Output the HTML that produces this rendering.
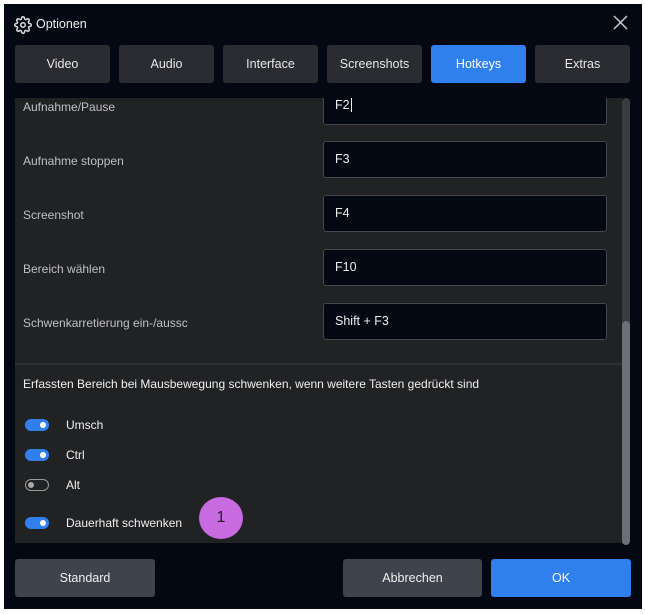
<!DOCTYPE html>
<html><head><style>
*{margin:0;padding:0;box-sizing:border-box}
body{width:645px;height:614px;background:#fff;font-family:"Liberation Sans",sans-serif;position:relative;overflow:hidden}
.win{position:absolute;left:4px;top:4px;width:638px;height:605px;background:#030812}
.a{position:absolute}
.tab{position:absolute;top:45px;width:95px;height:38px;background:#2a2c31;border-radius:3px;color:#e8e8e8;font-size:12.5px;text-align:center;line-height:38px}
.lbl{position:absolute;left:23px;color:#bfc0c4;font-size:12px}
.inp{position:absolute;left:323px;width:284px;height:37px;background:#030812;border:1px solid #45474c;border-radius:3px;color:#f0f0f0;font-size:12.5px;padding-left:11px;line-height:35px}
.tg{position:absolute;left:25px;width:24px;height:12px;border-radius:6px;background:#2f80ed}
.tg::after{content:"";position:absolute;right:3px;top:3px;width:6px;height:6px;border-radius:50%;background:#fff}
.tg.off::after{display:none}
.tl{position:absolute;left:66px;color:#f0f0f0;font-size:12px}
.btn{position:absolute;top:559px;height:38px;border-radius:3px;color:#eee;font-size:12.5px;text-align:center;line-height:38px}
</style></head><body>
<div class="win"></div>
<svg class="a" style="left:14px;top:16px" width="18" height="18" viewBox="0 0 24 24" fill="none" stroke="#ddd" stroke-width="2"><circle cx="12" cy="12" r="3"/><path d="M19.4 15a1.65 1.65 0 0 0 .33 1.82l.06.06a2 2 0 1 1-2.83 2.830l-.06-.06a1.65 1.65 0 0 0-1.820-.33 1.65 1.65 0 0 0-1 1.51V21a2 2 0 1 1-4 0v-.09A1.65 1.65 0 0 0 9 19.4a1.65 1.65 0 0 0-1.82.33l-.06.06a2 2 0 1 1-2.83-2.83l.06-.06a1.65 1.65 0 0 0 .33-1.82 1.65 1.65 0 0 0-1.51-1H3a2 2 0 1 1 0-4h.09A1.65 1.65 0 0 0 4.6 9a1.65 1.65 0 0 0-.33-1.82l-.06-.06a2 2 0 1 1 2.83-2.83l.06.06a1.65 1.65 0 0 0 1.82.33H9a1.650 1.65 0 0 0 1-1.51V3a2 2 0 1 1 4 0v.09a1.65 1.65 0 0 0 1 1.51 1.65 1.65 0 0 0 1.82-.33l.06-.06a2 2 0 1 1 2.83 2.83l-.06.06a1.65 1.65 0 0 0-.33 1.82V9a1.65 1.65 0 0 0 1.51 1H21a2 2 0 1 1 0 4h-.09a1.65 1.65 0 0 0-1.51 1z"/></svg>
<div class="a" style="left:36px;top:17px;color:#eee;font-size:12.5px">Optionen</div>
<svg class="a" style="left:613px;top:15px" width="15" height="15" viewBox="0 0 15 15" stroke="#ccc" stroke-width="1.5"><path d="M1 1L14 14M14 1L1 14"/></svg>
<div class="tab" style="left:15px">Video</div>
<div class="tab" style="left:119px">Audio</div>
<div class="tab" style="left:223px">Interface</div>
<div class="tab" style="left:327px">Screenshots</div>
<div class="tab" style="left:431px;background:#2f80ed;color:#fff">Hotkeys</div>
<div class="tab" style="left:535px">Extras</div>
<div class="a" style="left:15px;top:98px;width:607px;height:445px;background:#212224;overflow:hidden">
<div class="a" style="left:0;top:265px;width:607px;height:2px;background:#2e2f33"></div>
</div>
<div class="a" style="left:622px;top:98px;width:8px;height:447px;background:#3a3b3f;border-radius:4px"></div>
<div class="a" style="left:622px;top:321px;width:8px;height:224px;background:#6b6f78;border-radius:4px"></div>
<div class="lbl" style="top:100px">Aufnahme/Pause</div>
<div class="lbl" style="top:154px">Aufnahme stoppen</div>
<div class="lbl" style="top:208px">Screenshot</div>
<div class="lbl" style="top:262px">Bereich wählen</div>
<div class="lbl" style="top:316px">Schwenkarretierung ein-/aussc</div>
<div class="inp" style="top:98px;height:27px;border-top:none;border-radius:0 0 3px 3px;line-height:15px">F2<span style="border-left:1px solid #fff;margin-left:1px"></span></div>
<div class="inp" style="top:141px">F3</div>
<div class="inp" style="top:195px">F4</div>
<div class="inp" style="top:249px">F10</div>
<div class="inp" style="top:303px">Shift + F3</div>
<div class="a" style="left:23px;top:377px;color:#f0f0f0;font-size:12px">Erfassten Bereich bei Mausbewegung schwenken, wenn weitere Tasten gedrückt sind</div>
<div class="tg" style="top:419px"></div><div class="tl" style="top:418px">Umsch</div>
<div class="tg" style="top:449px"></div><div class="tl" style="top:448px">Ctrl</div>
<div class="tg off" style="top:479px;background:transparent;border:1px solid #999"><span class="a" style="left:2px;top:2px;width:6px;height:6px;border-radius:50%;background:#aaa"></span></div>
<div class="tl" style="top:478px">Alt</div>
<div class="tg" style="top:517px"></div><div class="tl" style="top:516px">Dauerhaft schwenken</div>
<div class="a" style="left:199px;top:497px;width:44px;height:42px;border-radius:50%;background:#c86ae0;color:#222;font-size:16px;text-align:center;line-height:42px">1</div>
<div class="btn" style="left:15px;width:140px;background:#3f444c">Standard</div>
<div class="btn" style="left:343px;width:139px;background:#3f444c">Abbrechen</div>
<div class="btn" style="left:491px;width:140px;background:#2f80ed;color:#fff">OK</div>
</body></html>
